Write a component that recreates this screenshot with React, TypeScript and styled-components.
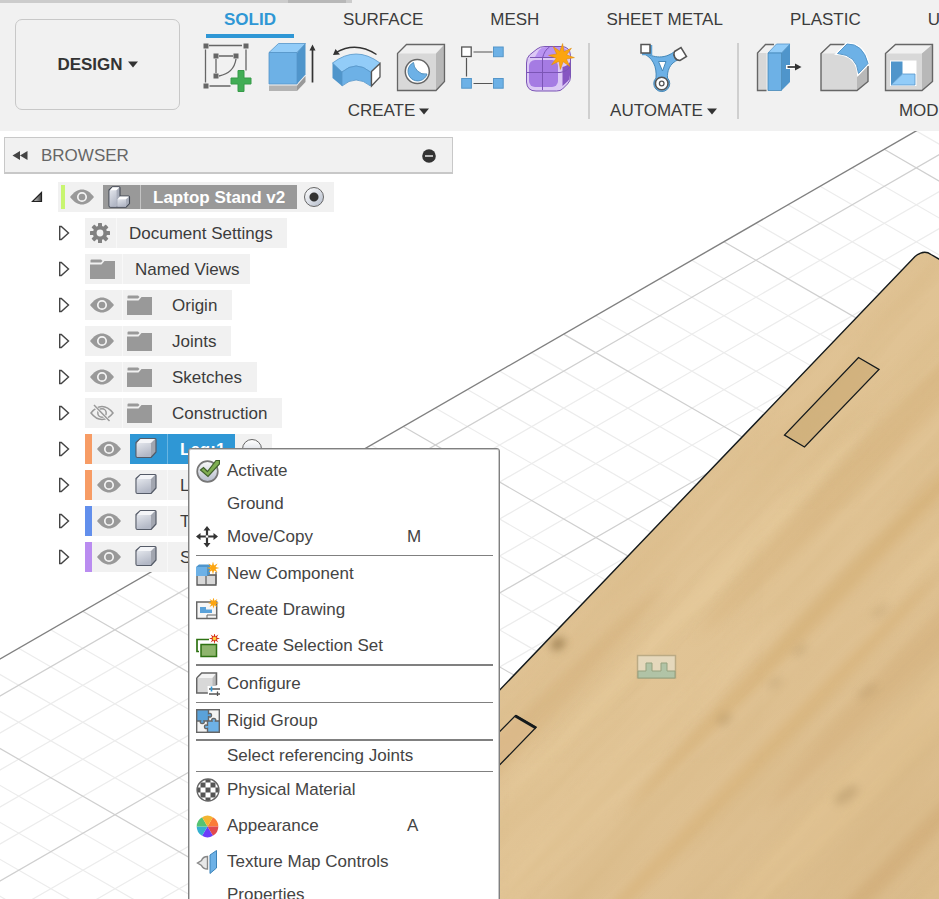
import React from "react";
import styled, { createGlobalStyle, css } from "styled-components";

const GlobalStyle = createGlobalStyle`
  *, *::before, *::after { box-sizing: border-box; }
  body { margin: 0; background: #fff; overflow: hidden; }
  button { font: inherit; color: inherit; background: none; border: 0; padding: 0; cursor: pointer; }
  ul { list-style: none; margin: 0; padding: 0; }
  svg { display: block; flex: none; }
`;

/* ---------- page shell ---------- */

const Shell = styled.div`
  display: flex;
  flex-direction: column;
  height: 100vh;
  overflow: hidden;
  font-family: "Liberation Sans", Arial, sans-serif;
  font-size: 17px;
  line-height: 20px;
  color: #3c3c3c;
`;

const Header = styled.header`
  flex: none;
  background: #f1f1f1;
  padding-bottom: 10px;
  overflow: hidden;
`;

const DocumentTabs = styled.div`
  display: flex;
  height: 3px;
`;

const DocumentTab = styled.div<{ $width: number; $active?: boolean }>`
  width: ${(p) => p.$width}px;
  background: ${(p) => (p.$active ? "#b8b8b8" : "#cccccc")};
`;

const HeaderRow = styled.div`
  display: flex;
  align-items: flex-start;
`;

const WorkspaceButton = styled.button`
  flex: none;
  display: flex;
  align-items: center;
  justify-content: center;
  gap: 5px;
  width: 165px;
  height: 91px;
  margin: 16px 22px 0 15px;
  border: 1px solid #c8c8c8;
  border-radius: 7px;
  font-weight: bold;
  color: #333;
`;

const Ribbon = styled.div`
  flex: 1;
  min-width: 0;
`;

const TabBar = styled.nav`
  display: flex;
  gap: 31px;
  padding-left: 4px;
`;

const Tab = styled.button<{ $active?: boolean }>`
  flex: none;
  height: 35px;
  padding: 2px 18px 0;
  border-bottom: 4px solid ${(p) => (p.$active ? "#2f97d5" : "transparent")};
  font-weight: ${(p) => (p.$active ? "bold" : "normal")};
  color: ${(p) => (p.$active ? "#2f97d5" : "#3c3c3c")};
  white-space: nowrap;
`;

const ToolGroups = styled.div`
  display: flex;
  padding-top: 5px;
`;

const ToolGroup = styled.section<{ $width: number; $after: number }>`
  flex: 0 0 ${(p) => p.$width}px;
  display: flex;
  flex-direction: column;
  align-items: center;
  margin-right: ${(p) => p.$after}px;
`;

const ToolRow = styled.div<{ $start?: boolean }>`
  display: flex;
  gap: 17px;
  align-self: ${(p) => (p.$start ? "flex-start" : "center")};
`;

const ToolButton = styled.button`
  width: 48px;
  height: 48px;
`;

const GroupLabel = styled.button`
  display: flex;
  align-items: center;
  gap: 4px;
  margin-top: 10px;
`;

const GroupDivider = styled.div<{ $after?: number }>`
  flex: none;
  width: 2px;
  height: 76px;
  background: #cfcfcf;
  margin-right: ${(p) => p.$after ?? 0}px;
`;

const Workspace = styled.main`
  position: relative;
  flex: 1;
  min-height: 0;
  overflow: hidden;
`;

const Canvas = styled.svg`
  position: absolute;
  inset: 0;
  width: 100%;
  height: 100%;
`;

/* ---------- browser panel ---------- */

const BrowserPanel = styled.aside`
  position: relative;
  width: 449px;
  margin: 6px 0 0 4px;
`;

const BrowserHeader = styled.div`
  display: flex;
  align-items: center;
  height: 37px;
  padding: 1px 16px 0 7px;
  background: #f1f1f1;
  border: 1px solid #c8c8c8;
  border-bottom-width: 2px;
  color: #666;
`;

const BrowserTitle = styled.h2`
  flex: 1;
  margin: 0 0 0 13px;
  font-size: 17px;
  font-weight: normal;
`;

const Tree = styled.ul`
  display: flex;
  flex-direction: column;
  gap: 6px;
  padding-top: 8px;
`;

const TreeRow = styled.li<{ $root?: boolean }>`
  display: flex;
  align-items: center;
  height: 30px;
  padding-left: ${(p) => (p.$root ? 27 : 54)}px;
`;

const Expander = styled.button`
  width: 27px;
`;

const Pill = styled.div<{ $inset?: boolean }>`
  display: flex;
  align-items: center;
  height: 30px;
  background: #f1f1f1;
  padding-left: ${(p) => (p.$inset ? 3 : 0)}px;
`;

const ColorBar = styled.span<{ $color: string; $short?: boolean }>`
  width: ${(p) => (p.$short ? 4 : 7)}px;
  height: ${(p) => (p.$short ? 24 : 30)}px;
  background: ${(p) => p.$color};
`;

const VisibilityButton = styled.button<{ $divided?: boolean }>`
  display: flex;
  align-items: center;
  justify-content: center;
  width: 38px;
  height: 30px;
  padding-right: 4px;
  ${(p) => p.$divided && css`border-right: 1px solid #f8f8f8;`}
`;

const IconCell = styled.span<{ $width: number; $tone?: "root" | "selected"; $open?: boolean }>`
  display: flex;
  align-items: center;
  padding-left: ${(p) => (p.$open ? 4 : 5)}px;
  width: ${(p) => p.$width}px;
  height: ${(p) => (p.$tone === "root" ? 24 : 30)}px;
  border-right: ${(p) => (p.$open ? "0" : "1px solid #f8f8f8")};
  ${(p) => p.$tone === "root" && css`background: #999; border-color: #c4c4c4;`}
  ${(p) => p.$tone === "selected" && css`background: #2f97d5; border-color: #69b5e2;`}
`;

const Label = styled.span<{ $right: number; $tone?: "root" | "selected" }>`
  display: flex;
  align-items: center;
  height: ${(p) => (p.$tone === "root" ? 24 : 30)}px;
  padding: 1px ${(p) => p.$right}px 0 12px;
  white-space: nowrap;
  ${(p) => p.$tone && css`
    color: #fff;
    font-weight: bold;
    background: ${p.$tone === "root" ? "#999" : "#2f97d5"};
  `}
`;

const ActiveRadio = styled.input`
  appearance: none;
  width: 20px;
  height: 20px;
  margin: 0 10px 0 7px;
  border: 1px solid #666;
  border-radius: 50%;
  background: linear-gradient(#fff, #c5cbd6);
  &:checked {
    background: radial-gradient(circle, #333 0 4px, transparent 5px), linear-gradient(135deg, #fff, #b4bccb);
  }
`;

/* ---------- context menu ---------- */

const Menu = styled.div`
  position: absolute;
  left: 188px;
  top: 317px;
  width: 312px;
  padding: 4px 6px 6px 7px;
  background: #fff;
  border: 1px solid #808080;
  border-radius: 3px;
  box-shadow: inset 0 0 0 1px #c8c8c8;
`;

const MenuItem = styled.button<{ $compact?: boolean }>`
  display: grid;
  grid-template-columns: 31px 180px 1fr;
  align-items: center;
  width: 100%;
  height: ${(p) => (p.$compact ? 30 : 36)}px;
  text-align: left;
  white-space: nowrap;
  color: #444;
`;

const MenuIconSlot = styled.span`
  width: 24px;
  height: 24px;
`;

const Separator = styled.hr<{ $thick?: boolean }>`
  margin: 0;
  border: 0;
  height: ${(p) => (p.$thick ? 2 : 1)}px;
  background: #808080;
`;

/* ---------- small glyphs ---------- */

const Caret = () => (
  <svg width="10" height="7" viewBox="0 0 10 7"><path d="M0 .5h10L5 6.500z" fill="#333" /></svg>
);

const Arrow = () => (
  <svg width="12" height="16" viewBox="0 0 12 16">
    <path d="M1.700 1.500h1.600L10.500 8l-7.200 6.500H1.700z" fill="#fff" stroke="#444" strokeWidth="1.400" />
  </svg>
);

const OpenArrow = () => (
  <svg width="12" height="14" viewBox="0 0 12 14">
    <defs>
      <linearGradient id="openArrow" x1="0" x2="1"><stop offset="0" stopColor="#ddd" /><stop offset="1" stopColor="#444" /></linearGradient>
    </defs>
    <path d="M10.500 2.500v9h-9z" fill="url(#openArrow)" stroke="#222" strokeWidth="1.200" />
  </svg>
);

const Eye = () => (
  <svg width="24" height="16" viewBox="0 0 24 16">
    <path d="M0 8C4 2.800 8 .5 12 .5S20 2.800 24 8c-4 5.200-8 7.500-12 7.500S4 13.200 0 8z" fill="#999" />
    <circle cx="12" cy="8" r="4.200" fill="#999" stroke="#f4f4f4" strokeWidth="1.700" />
  </svg>
);

const EyeOff = () => (
  <svg width="24" height="18" viewBox="0 0 24 18" fill="none" stroke="#999" strokeWidth="1.500">
    <path d="M1 9c3.500-4.500 7-6.500 11-6.500S19.500 4.500 23 9c-3.500 4.500-7 6.500-11 6.500S4.500 13.500 1 9z" />
    <circle cx="12" cy="9" r="4.200" />
    <path d="M4.500 2l15 15" stroke="#f1f1f1" strokeWidth="3" />
    <path d="M4 1l15.500 16" />
  </svg>
);

const Folder = () => (
  <svg width="25" height="20" viewBox="0 0 25 20">
    <path d="M.5 1.500Q.5.500 1.500.500H11l1.500 1.500-1.500 1.500H.500z" fill="#999" />
    <path d="M0 5.500h11.500l3-3.500H25v18H0z" fill="#999" />
  </svg>
);

const Gear = () => (
  <svg width="20" height="20" viewBox="-10 -10 20 20">
    <g fill="#808080">
      {[0, 45, 90, 135].map((a) => <rect key={a} x="-2" y="-10" width="4" height="20" rx=".5" transform={`rotate(${a})`} />)}
      <circle r="7.200" />
    </g>
    <circle r="3.400" fill="#f1f1f1" />
  </svg>
);

const ShadeDefs = () => (
  <defs>
    <linearGradient id="cubeFace" x1="0" y1="0" x2=".4" y2="1"><stop offset="0" stopColor="#e3e6ec" /><stop offset="1" stopColor="#b3b8c6" /></linearGradient>
  </defs>
);

const Body = () => (
  <svg width="22" height="24" viewBox="0 0 22 24">
    <ShadeDefs />
    <path d="M5.500 1.500H20q1 0 1 1V15l-5 5.500H2.500q-1.500 0-1.500-1.500V5.500z" fill="#a2a6b0" stroke="#555b68" strokeWidth="1.200" strokeLinejoin="round" />
    <path d="M5.500 2H20l-4 4H2z" fill="#f4f5f8" />
    <rect x="1.700" y="6" width="14.300" height="14" rx="1" fill="url(#cubeFace)" />
  </svg>
);

const Assembly = () => (
  <svg width="23" height="22" viewBox="0 0 23 22">
    <ShadeDefs />
    <path d="M4.500.7H11q1 0 1 1V10h8.500q1 0 1 1v6.500l-3.500 3.800H2.500q-1.500 0-1.500-1.500V4z" fill="#a9aebb" stroke="#444a55" strokeWidth="1.100" />
    <rect x="1.600" y="4" width="7" height="16.800" rx="1" fill="url(#cubeFace)" />
    <path d="M4.500 1.200h7l-3 3H2z" fill="#fff" />
    <rect x="9.500" y="13" width="8.500" height="7.800" rx=".6" fill="url(#cubeFace)" />
    <path d="M12 10.500h9l-3 2.700H9.500z" fill="#fff" />
  </svg>
);

const Rewind = () => (
  <svg width="16" height="11" viewBox="0 0 16 11"><path d="M8 1v9L.5 5.500zM15.500 1v9L8 5.500z" fill="#444" /></svg>
);

const Minus = () => (
  <svg width="14" height="14" viewBox="0 0 14 14"><circle cx="7" cy="7" r="6.800" fill="#333" /><path d="M3 7h8" stroke="#ddd" strokeWidth="1.600" /></svg>
);

const starPath = (cx: number, cy: number, outer: number, inner: number, n: number) =>
  Array.from({ length: n * 2 }, (_, i) => {
    const r = i % 2 ? inner : outer;
    const a = (Math.PI * i) / n - Math.PI / 2;
    return `${i ? "L" : "M"}${(cx + r * Math.cos(a)).toFixed(2)} ${(cy + r * Math.sin(a)).toFixed(2)}`;
  }).join("") + "z";

/* ---------- ribbon icons ---------- */

const Tool = ({ children }: { children: React.ReactNode }) => (
  <svg width="48" height="48" viewBox="0 0 48 48" overflow="visible">{children}</svg>
);

const SketchIcon = () => (
  <Tool>
    <g stroke="#666" strokeWidth="1.300" fill="none">
      <path d="M7 2.500h33M7.500 43h21M3.500 6.500v33M44 6.500v21M14 16v14M17 13h14M34 16Q32 30 17 33" />
    </g>
    <g fill="#666">
      {[[4, 3], [44, 3], [4, 43], [14, 13], [34, 13], [14, 33]].map(([x, y]) => <rect key={`${x}-${y}`} x={x - 2.500} y={y - 2.500} width="5" height="5" />)}
    </g>
    <path d="M36 27.500h6v7.500h7v6h-7v7.500h-6V41h-7v-6h7z" fill="#41ad55" stroke="#379a49" />
  </Tool>
);

const ExtrudeIcon = () => (
  <Tool>
    <path d="M2 9.500L11.500.5h27L30 9.500z" fill="#92ccf8" stroke="#5596c9" strokeWidth=".8" />
    <path d="M30 9.500L38.500.5v31L30 41z" fill="#4f95cb" />
    <path d="M2 9.500h28V41H2z" fill="#6db1e6" stroke="#5596c9" strokeWidth=".8" />
    <path d="M2 42.500h28V48H2z" fill="#b3b3b3" />
    <path d="M30 42.500l8.500-9.500v6L30 48z" fill="#999" />
    <path d="M45.500 39.500V5" stroke="#333" strokeWidth="1.700" />
    <path d="M42.500 7.500l3-6 3 6z" fill="#333" />
  </Tool>
);

const RevolveIcon = () => (
  <Tool>
    <path d="M.5 20Q24 2 48 20l-9.500 9Q24 17 10 29z" fill="#92ccf8" stroke="#5596c9" strokeWidth=".8" />
    <path d="M.5 20l9.500 9v14L.5 35z" fill="#4f95cb" />
    <path d="M10 29Q24 17 38.500 29v14Q24 31 10 43z" fill="#6db1e6" stroke="#5596c9" strokeWidth=".8" />
    <path d="M39.500 28.500L48 20.500v13.500l-8.500 9z" fill="#fff" stroke="#555" strokeWidth="1.300" />
    <path d="M4 9.500Q24-2 44.500 11.500" fill="none" stroke="#333" strokeWidth="1.400" />
    <path d="M1 12l2.500-6 4.500 5.500z" fill="#333" />
  </Tool>
);

const HoleIcon = () => (
  <Tool>
    <path d="M.5 10.500L9.500 1.500H47.500v37L39 47.500H.5z" fill="#d8d8d8" />
    <path d="M.5 10.500L9.500 1.500H47.500L39 10.500z" fill="#f0f0f0" />
    <path d="M39 10.500l8.500-9v37L39 47.500z" fill="#b8b8b8" />
    <path d="M.5 10.500L9.500 1.500H47.500v37L39 47.500H.5z" fill="none" stroke="#666" strokeWidth="1.300" />
    <circle cx="20.300" cy="28.500" r="12" fill="#fff" stroke="#666" strokeWidth="1.500" />
    <path d="M16.500 19.500A9.700 9.700 0 1 0 30 31q-5.500 1-9.500-3t-4-8.500z" fill="#6db1e6" stroke="#4588b8" strokeWidth=".9" />
  </Tool>
);

const PatternIcon = () => (
  <Tool>
    <path d="M11.500 9h19M11.500 40.500h19M4.500 15v18.500" stroke="#555" strokeWidth="1.200" />
    <rect x="-.3" y="4" width="9.500" height="9.500" fill="#fff" stroke="#555" strokeWidth="1.300" />
    {[[31.500, 4], [-.3, 35.500], [31.500, 35.500]].map(([x, y]) => <rect key={`${x}-${y}`} x={x} y={y} width="9.700" height="9.700" fill="#6db1e6" stroke="#5596c9" />)}
  </Tool>
);

const FormIcon = () => (
  <Tool>
    <path d="M10 6Q13 3.500 18 3.500H34q9 0 9.500 9V34q0 4-3 7l-5 5q-2 2-6 2H9q-9 0-9.500-9V20q0-5 3-8z" fill="#dcc9f5" stroke="#7b55b5" />
    <path d="M12 7q3-3 7-3h12q6 0 9 3l-6 7H8z" fill="#b993f2" />
    <path d="M35.500 24q5-1 7.500-5v13q0 4-2 6l-5.500 5z" fill="#8656c2" />
    <rect x="2" y="17" width="29" height="27" rx="6" fill="#a57be3" />
    <path d="M15.500 47V15q2-8 7-11M0 29.500h33q8-1 10.500-7M3 14.500h28" fill="none" stroke="#7b55b5" strokeWidth="1" />
    <path d={starPath(34.500, 13.500, 13, 5.500, 8)} fill="#fca510" stroke="#dd8a0a" strokeWidth=".5" transform="rotate(5 34.500 13.500)" />
  </Tool>
);

const AutomateIcon = () => (
  <Tool>
    <path d="M2 9.500C9 11 20 19 34 9l5 7.500C29 20 27 29 27.500 35a8 8 0 1 1-11.500 0C17 24 13 14 2 10z" fill="#6db1e6" stroke="#4588b8" />
    <path d="M11 2v9H2" fill="none" stroke="#5ba2d8" strokeWidth="2.500" />
    <path d="M18.500 18.500h7.500l-3.500 9.500z" fill="#fff" stroke="#4588b8" />
    <rect x="1" y="1.500" width="9" height="8.500" fill="#fff" stroke="#555" strokeWidth="1.500" />
    <path d="M34.500 8.500l6.500-4 5.500 9-6.500 4a6.300 6.300 0 0 1-5.500-9z" fill="#fff" stroke="#555" strokeWidth="1.500" />
    <circle cx="21.700" cy="40.500" r="6.300" fill="#fff" stroke="#555" strokeWidth="1.600" />
    <circle cx="21.700" cy="40.500" r="2.300" fill="none" stroke="#555" strokeWidth="1.300" />
  </Tool>
);

const PressPullIcon = () => (
  <Tool>
    <path d="M2.500 10l8-8.500h9L11.500 10v37.500h-9z" fill="#f1f1f1" />
    <path d="M2.500 10h9v37.500h-9z" fill="#d8d8d8" />
    <path d="M19 1.500h-8.500L2.500 10v37.500h9" fill="none" stroke="#666" strokeWidth="1.400" />
    <path d="M13 10l8.500-9H35l-8.500 9z" fill="#92ccf8" stroke="#5596c9" strokeWidth=".8" />
    <path d="M26.500 10L35 1v38l-8.500 8.500z" fill="#4f95cb" />
    <path d="M13 10h13.500v37.500H13z" fill="#6db1e6" stroke="#4588b8" strokeWidth=".8" />
    <path d="M31 24h8" stroke="#fff" strokeWidth="4" />
    <path d="M32.500 24H42" stroke="#333" strokeWidth="1.700" />
    <path d="M40 20.500l6.500 3.500-6.500 3.500z" fill="#333" />
  </Tool>
);

const FilletIcon = () => (
  <Tool>
    <path d="M1 10.500l9.500-9h16L17 10.500Q35 12 37 31v16.500H1z" fill="#f1f1f1" />
    <path d="M1 10.500h16Q36 12 37 31v16.500H1z" fill="#d8d8d8" />
    <path d="M37 33l11-10v15.500l-11 9z" fill="#b8b8b8" />
    <path d="M25 1.500H10.500L1 10.500v37h36l11-9V23" fill="none" stroke="#666" strokeWidth="1.400" />
    <path d="M17.500 10.500L27 1q16-.5 21 19.500l-9.500 10Q37 12 17.500 10.500z" fill="#6db1e6" stroke="#fff" strokeWidth="3" />
    <path d="M17.500 10.500L27 1q16-.5 21 19.500l-9.500 10Q37 12 17.500 10.500z" fill="#6db1e6" stroke="#5596c9" />
  </Tool>
);

const ShellIcon = () => (
  <Tool>
    <path d="M.5 10.500l10-9H47.500v37L37 47.500H.5z" fill="#d8d8d8" />
    <path d="M.5 10.500l10-9H47.500L37 10.500z" fill="#f1f1f1" />
    <path d="M37 10.500l10.500-9v37L37 47.500z" fill="#b8b8b8" />
    <path d="M.5 10.500l10-9H47.500v37L37 47.500H.5z" fill="none" stroke="#666" strokeWidth="1.400" />
    <path d="M5 17.500h26.500V43H5z" fill="#fff" />
    <path d="M6 18.500h11.500V31L6 42z" fill="#4f95cb" />
    <path d="M6 42l11.500-11H30v11z" fill="#92ccf8" stroke="#5596c9" strokeWidth=".8" />
  </Tool>
);

/* ---------- menu icons ---------- */

const Small = ({ children }: { children: React.ReactNode }) => (
  <svg width="24" height="24" viewBox="0 0 24 24">{children}</svg>
);

const ActivateIcon = () => (
  <Small>
    <defs><linearGradient id="disc" x1="0" y1="0" x2="0" y2="1"><stop offset="0" stopColor="#fafafa" /><stop offset="1" stopColor="#b5bccb" /></linearGradient></defs>
    <circle cx="11.500" cy="12.500" r="10.300" fill="url(#disc)" stroke="#777" strokeWidth="1.700" />
    <path d="M4.500 11l3-2.500 4 4L20 1.500h3.500V5L12 17.500z" fill="#7fae52" stroke="#3f5f2a" strokeWidth="1.200" />
  </Small>
);

const MoveIcon = () => (
  <Small>
    <path d="M11 3v17M2 11.500h18" stroke="#333" strokeWidth="2.200" />
    <path d="M11 1l3.500 4.500h-7zM11 22.500L7.500 18h7zM0 11.500L4.500 8v7zM22 11.500L17.500 8v7z" fill="#333" />
    <circle cx="11" cy="11.500" r="1.200" fill="#fff" />
  </Small>
);

const NewComponentIcon = () => (
  <Small>
    <path d="M1 13h19v10H1z" fill="#d8d8d8" stroke="#555" strokeWidth="1.300" />
    <path d="M10 13v10M20 22V10" stroke="#666" strokeWidth="1.300" />
    <path d="M0 5l3-2.500h11V12l-3 2H0z" fill="#4f95cb" />
    <path d="M0 5h11v9H0z" fill="#6db1e6" />
    <path d={starPath(17, 6, 6.500, 2.700, 8)} fill="#fca510" />
  </Small>
);

const DrawingIcon = () => (
  <Small>
    <rect x=".7" y="4" width="20" height="16.500" fill="#f6f6f6" stroke="#666" strokeWidth="1.500" />
    <path d="M4 9h6v2.500h6V15H4z" fill="#5aa2da" />
    <path d="M11 20v-3h9.500" stroke="#666" fill="none" />
    <path d={starPath(17.500, 5, 5.500, 2.500, 8)} fill="#fca510" />
  </Small>
);

const SelectionSetIcon = () => (
  <Small>
    <path d="M13 5.500H1v12h2" fill="none" stroke="#2e7212" strokeWidth="1.700" />
    <rect x="5" y="10.500" width="15.500" height="12" fill="#8fb56d" stroke="#2e7212" strokeWidth="1.500" />
    <path d={starPath(18.500, 4.500, 5.500, 2.300, 8)} fill="#d62a12" />
    <circle cx="18.500" cy="4.500" r="1.800" fill="#ffd23e" />
  </Small>
);

const ConfigureIcon = () => (
  <Small>
    <path d="M.7 6l5-5H20.500v20H.7z" fill="#d8d8d8" />
    <path d="M.7 6l5-5H20.500l-4 5z" fill="#f4f4f4" />
    <path d="M16.500 6l4-5v20h-4z" fill="#bbb" />
    <path d="M.7 6l5-5H20.500v12M.7 6v15H12" fill="none" stroke="#666" strokeWidth="1.500" />
    <path d="M11.500 14H24v10H12z" fill="#fff" />
    <path d="M13 17h11M13 22h11M21.500 19.500V24" stroke="#555" strokeWidth="1.300" />
    <path d="M15.500 14.500v5" stroke="#2f97d5" strokeWidth="1.600" />
  </Small>
);

const RigidGroupIcon = () => (
  <Small>
    <rect x=".7" y=".7" width="22.600" height="22.600" fill="#f3f3f3" stroke="#666" strokeWidth="1.400" />
    <path d="M.7.7h11.800v4q3-1 3 1.500t-3 1.500v4.300H8q1 2.500-1.700 2.500T4.500 12H.7z" fill="#5aa2da" stroke="#666" strokeWidth="1.400" />
    <path d="M23.300 23.300H11.500v-4q-3 1-3-1.500t3-1.500V12H16q-1-2.500 1.700-2.500T19.500 12h3.800z" fill="#6db1e6" stroke="#666" strokeWidth="1.400" />
  </Small>
);

const MaterialIcon = () => (
  <Small>
    <defs>
      <pattern id="checks" width="10" height="10" patternUnits="userSpaceOnUse" x="-.5" y="-.5">
        <rect width="10" height="10" fill="#fff" /><path d="M0 0h5v5H0zM5 5h5v5H5z" fill="#555" />
      </pattern>
    </defs>
    <circle cx="12" cy="12" r="11" fill="url(#checks)" stroke="#666" strokeWidth="1.300" />
  </Small>
);

const wheel = ["#fb7c38", "#e14a4e", "#6b3dfa", "#35b0d0", "#55c372", "#f3b431"];

const AppearanceIcon = () => (
  <Small>
    {wheel.map((color, i) => {
      const at = (deg: number) => `${(11.5 + 10.8 * Math.cos((deg * Math.PI) / 180)).toFixed(2)} ${(12.5 + 10.8 * Math.sin((deg * Math.PI) / 180)).toFixed(2)}`;
      const start = i * 60 - 60;
      return <path key={color} d={`M11.500 12.500L${at(start)}A10.800 10.800 0 0 1 ${at(start + 60)}z`} fill={color} />;
    })}
  </Small>
);

const TextureIcon = () => (
  <Small>
    <path d="M14 5l6.500-4.500V18L14 23.500z" fill="#6db1e6" stroke="#3d83b8" />
    <path d="M11.500 6.500Q7 6.500 5.500 10.500L1.500 13l4 2.500Q7 19 11.500 19z" fill="#e8e8e8" stroke="#888" strokeWidth="1.400" />
  </Small>
);

/* ---------- model view ---------- */

const SLOPE = 0.5764;
const EDGE_Y = 528;
const edgeAt = (x: number) => EDGE_Y - SLOPE * x;

const across = Array.from({ length: 46 }, (_, i) => ({ offset: 37 * (i + 1), major: i % 5 === 0 }));
const down = Array.from({ length: 64 }, (_, i) => ({ x: 1044.5 - 32.06 * i, major: i % 5 === 0 }));

const streaks = [
  [-420, 60, 300, 14, "#d2ad78", 0.4], [-120, 95, 260, 10, "#e6cb9c", 0.6], [160, 120, 280, 16, "#cfa870", 0.3],
  [-300, 160, 240, 18, "#e5c99b", 0.6], [20, 190, 320, 9, "#d0a768", 0.4], [240, 230, 220, 14, "#e4c898", 0.5],
  [-200, 250, 280, 8, "#d3a968", 0.35], [60, 290, 260, 14, "#c99f66", 0.25], [-80, 340, 320, 20, "#e2c493", 0.6],
  [180, 380, 200, 10, "#c2965d", 0.3], [-160, 420, 260, 9, "#c89e66", 0.35], [40, 470, 260, 18, "#dfc190", 0.5],
  [-60, 510, 220, 8, "#bf945c", 0.3],
] as const;

const knots = [
  [558, 513, 8, 5, 0.7], [800, 519, 9, 4, 0.18], [868, 560, 12, 5, 0.15], [724, 588, 8, 6, 0.2],
  [846, 664, 14, 6, 0.25], [775, 552, 8, 5, 0.15], [880, 480, 10, 4, 0.15],
];

const ModelView = () => (
  <Canvas aria-hidden="true">
    <defs>
      <clipPath id="board"><path d="M916 124.500Q924 118 931 123.500L1400 394V1400H-300L300 767.500Z" /></clipPath>
      <linearGradient id="wood" gradientUnits="userSpaceOnUse" x1="560" y1="350" x2="960" y2="740">
        <stop offset="0" stopColor="#dec092" /><stop offset=".35" stopColor="#e1c495" />
        <stop offset=".6" stopColor="#dec091" /><stop offset="1" stopColor="#dabb8b" />
      </linearGradient>
      <filter id="soft" x="-20%" y="-200%" width="140%" height="500%"><feGaussianBlur stdDeviation="12 5" /></filter>
      <filter id="smudge" x="-200%" y="-200%" width="500%" height="500%"><feGaussianBlur stdDeviation="4" /></filter>
      <filter id="grain" x="0" y="0" width="100%" height="100%">
        <feTurbulence type="fractalNoise" baseFrequency="0.004 0.04" numOctaves="3" seed="7" />
        <feColorMatrix values="0 0 0 0 0.62  0 0 0 0 0.42  0 0 0 0 0.18  1.6 0 0 0 -0.62" />
      </filter>
    </defs>

    <g fill="none" strokeWidth="1.2">
      {[false, true].map((major) => (
        <g key={String(major)} stroke={major ? "#cfcfcf" : "#ececec"}>
          {across.filter((l) => l.major === major).map((l) => (
            <path key={l.offset} d={`M-10 ${edgeAt(-10) + l.offset}L2400 ${edgeAt(2400) + l.offset}`} />
          ))}
          {down.filter((l) => l.major === major).map((l) => (
            <path key={l.x} d={`M${l.x} ${edgeAt(l.x)}l1600 ${1600 * SLOPE}`} />
          ))}
        </g>
      ))}
      <path d={`M-10 ${edgeAt(-10)}L1400 ${edgeAt(1400)}`} stroke="#808080" strokeWidth="1.400" />
    </g>

    <g clipPath="url(#board)">
      <rect x="0" y="100" width="2400" height="1400" fill="url(#wood)" />
      <g transform="translate(700 330) rotate(-46)">
        {streaks.map(([x, y, rx, ry, color, opacity]) => (
          <ellipse key={`${x}-${y}`} cx={x} cy={y} rx={rx} ry={ry} fill={color} opacity={opacity} filter="url(#soft)" />
        ))}
        <rect x="-800" y="-100" width="1600" height="1000" filter="url(#grain)" opacity=".3" />
      </g>
      {knots.map(([x, y, rx, ry, opacity]) => (
        <ellipse key={x} cx={x} cy={y} rx={rx} ry={ry} fill="#85683a" opacity={opacity} filter="url(#smudge)" transform={`rotate(-35 ${x} ${y})`} />
      ))}
    </g>
    <path d="M300 767.500L915 125.500Q924 118 931 123.500L1400 394" fill="none" stroke="#151a1c" strokeWidth="1.400" />

    <g stroke="#151a1c" strokeWidth="1.300">
      <path d="M858.500 226.500L879 238.500 804.500 316 784.500 304z" fill="#cbab74" fillOpacity=".65" />
      <path d="M450 651L515.500 584.500 536 596.500 450 685z" fill="#dcb98a" fillOpacity=".6" />
      <path d="M515.500 585L536 597" strokeWidth="3" />
    </g>

    <g opacity=".9" strokeWidth="1">
      <rect x="637.500" y="524.500" width="38" height="22.500" fill="#e6dbc1" stroke="#b7a883" strokeWidth="1.500" />
      <path d="M638 547v-7h8v-8h6v8h9v-8h6v8h8v7z" fill="#acc4a9" stroke="#8d9e7c" />
    </g>
  </Canvas>
);

/* ---------- data ---------- */

const tabs = ["SOLID", "SURFACE", "MESH", "SHEET METAL", "PLASTIC", "UTILITIES"];

const createTools: [string, React.FC][] = [
  ["Create Sketch", SketchIcon], ["Extrude", ExtrudeIcon], ["Revolve", RevolveIcon],
  ["Hole", HoleIcon], ["Rectangular Pattern", PatternIcon], ["Create Form", FormIcon],
];
const modifyTools: [string, React.FC][] = [["Press Pull", PressPullIcon], ["Fillet", FilletIcon], ["Shell", ShellIcon]];

const folders = [
  { name: "Origin", visible: true },
  { name: "Joints", visible: true },
  { name: "Sketches", visible: true },
  { name: "Construction", visible: false },
];

const components = [
  { name: "Leg:1", color: "#f79c65", selected: true },
  { name: "Leg:2", color: "#f79c65" },
  { name: "Top:1", color: "#628fec" },
  { name: "Stop:1", color: "#ba8cf0" },
];

type Entry = { label: string; icon?: React.FC; keys?: string; compact?: boolean } | "thin" | "thick";

const menuEntries: Entry[] = [
  { label: "Activate", icon: ActivateIcon },
  { label: "Ground", compact: true },
  { label: "Move/Copy", icon: MoveIcon, keys: "M" },
  "thin",
  { label: "New Component", icon: NewComponentIcon },
  { label: "Create Drawing", icon: DrawingIcon },
  { label: "Create Selection Set", icon: SelectionSetIcon },
  "thick",
  { label: "Configure", icon: ConfigureIcon },
  "thin",
  { label: "Rigid Group", icon: RigidGroupIcon },
  "thick",
  { label: "Select referencing Joints", compact: true },
  "thin",
  { label: "Physical Material", icon: MaterialIcon },
  { label: "Appearance", icon: AppearanceIcon, keys: "A" },
  { label: "Texture Map Controls", icon: TextureIcon },
  { label: "Properties", compact: true },
];

const Tools = ({ items, start }: { items: [string, React.FC][]; start?: boolean }) => (
  <ToolRow $start={start}>
    {items.map(([name, Icon]) => <ToolButton key={name} aria-label={name}><Icon /></ToolButton>)}
  </ToolRow>
);

export default function App() {
  return (
    <Shell>
      <GlobalStyle />
      <Header>
        <DocumentTabs>
          <DocumentTab $width={288} />
          <DocumentTab $width={58} $active />
          <DocumentTab $width={6} />
        </DocumentTabs>
        <HeaderRow>
          <WorkspaceButton>DESIGN <Caret /></WorkspaceButton>
          <Ribbon>
            <TabBar>
              {tabs.map((t, i) => <Tab key={t} $active={i === 0}>{t}</Tab>)}
            </TabBar>
            <ToolGroups>
              <ToolGroup $width={373} $after={13}>
                <Tools items={createTools} />
                <GroupLabel>CREATE <Caret /></GroupLabel>
              </ToolGroup>
              <GroupDivider />
              <ToolGroup $width={147} $after={0}>
                <Tools items={[["Automated Modeling", AutomateIcon]]} />
                <GroupLabel>AUTOMATE <Caret /></GroupLabel>
              </ToolGroup>
              <GroupDivider $after={16} />
              <ToolGroup $width={368} $after={0}>
                <Tools items={modifyTools} start />
                <GroupLabel>MODIFY <Caret /></GroupLabel>
              </ToolGroup>
            </ToolGroups>
          </Ribbon>
        </HeaderRow>
      </Header>

      <Workspace>
        <ModelView />
        <BrowserPanel>
          <BrowserHeader>
            <button aria-label="Collapse browser"><Rewind /></button>
            <BrowserTitle>BROWSER</BrowserTitle>
            <button aria-label="Hide browser"><Minus /></button>
          </BrowserHeader>
          <Tree>
            <TreeRow $root>
              <Expander aria-label="Collapse Laptop Stand v2"><OpenArrow /></Expander>
              <Pill $inset>
                <ColorBar $color="#c8f570" $short />
                <VisibilityButton aria-label="Toggle visibility"><Eye /></VisibilityButton>
                <IconCell $width={38} $tone="root"><Assembly /></IconCell>
                <Label $right={12} $tone="root">Laptop Stand v2</Label>
                <ActiveRadio type="radio" name="active" defaultChecked aria-label="Activate Laptop Stand v2" />
              </Pill>
            </TreeRow>
            <TreeRow>
              <Expander aria-label="Expand Document Settings"><Arrow /></Expander>
              <Pill>
                <IconCell $width={32}><Gear /></IconCell>
                <Label $right={14}>Document Settings</Label>
              </Pill>
            </TreeRow>
            <TreeRow>
              <Expander aria-label="Expand Named Views"><Arrow /></Expander>
              <Pill>
                <IconCell $width={38}><Folder /></IconCell>
                <Label $right={10}>Named Views</Label>
              </Pill>
            </TreeRow>
            {folders.map((f) => (
              <TreeRow key={f.name}>
                <Expander aria-label={`Expand ${f.name}`}><Arrow /></Expander>
                <Pill>
                  <VisibilityButton $divided aria-label={`Toggle ${f.name}`}>{f.visible ? <Eye /> : <EyeOff />}</VisibilityButton>
                  <IconCell $width={37} $open><Folder /></IconCell>
                  <Label $right={15}>{f.name}</Label>
                </Pill>
              </TreeRow>
            ))}
            {components.map((c) => (
              <TreeRow key={c.name}>
                <Expander aria-label={`Expand ${c.name}`}><Arrow /></Expander>
                <Pill>
                  <ColorBar $color={c.color} />
                  <VisibilityButton aria-label={`Toggle ${c.name}`}><Eye /></VisibilityButton>
                  <IconCell $width={38} $tone={c.selected ? "selected" : undefined}><Body /></IconCell>
                  <Label $right={10} $tone={c.selected ? "selected" : undefined}>{c.name}</Label>
                  <ActiveRadio type="radio" name="active" aria-label={`Activate ${c.name}`} />
                </Pill>
              </TreeRow>
            ))}
          </Tree>
        </BrowserPanel>

        <Menu role="menu">
          {menuEntries.map((e, i) =>
            typeof e === "string" ? (
              <Separator key={i} $thick={e === "thick"} />
            ) : (
              <MenuItem key={e.label} role="menuitem" $compact={e.compact}>
                <MenuIconSlot>{e.icon && <e.icon />}</MenuIconSlot>
                <span>{e.label}</span>
                <span>{e.keys}</span>
              </MenuItem>
            )
          )}
        </Menu>
      </Workspace>
    </Shell>
  );
}
